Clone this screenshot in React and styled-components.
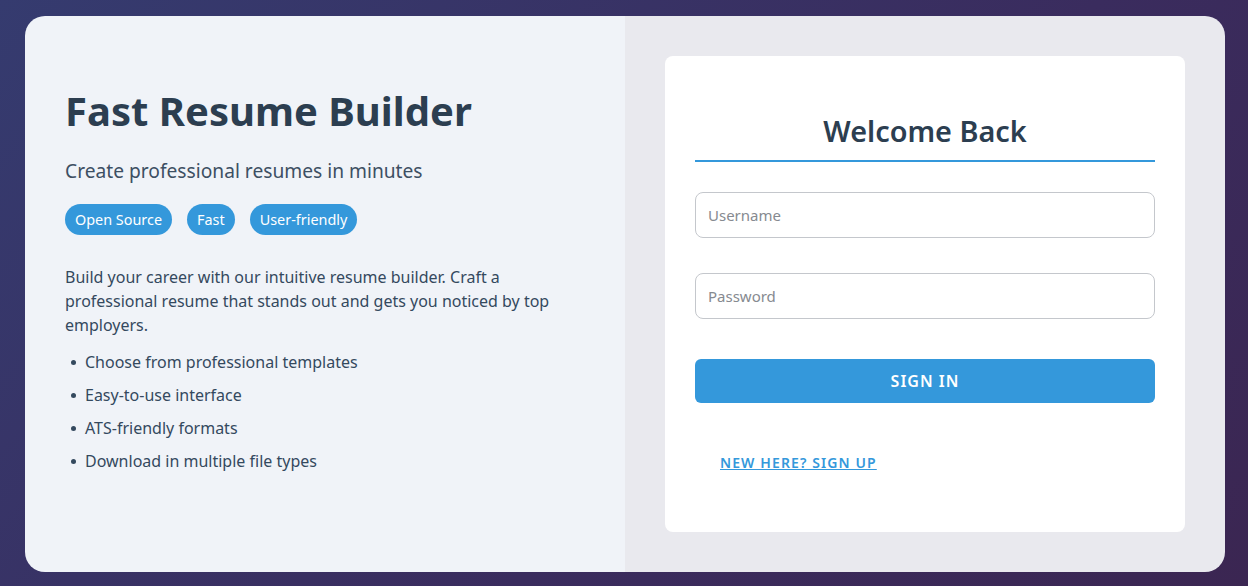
import React from 'react'
import styled, { createGlobalStyle } from 'styled-components'

const GlobalStyle = createGlobalStyle`
    * { box-sizing: border-box; }
    body {
        margin: 0;
        font-family: "Noto Sans", "Open Sans", sans-serif;
        background: linear-gradient(135deg, #353b6f 0%, #3a2c5e 60%, #3b2652 100%);
        min-height: 586px;
    }
`

const Page = styled.div`
    height: 586px;
    display: flex;
    align-items: center;
    justify-content: center;
    padding-top: 2px;
`

const Shell = styled.div`
    width: 1200px;
    height: 556px;
    display: flex;
    border-radius: 20px;
    overflow: hidden;
    margin-left: 2px;
`

const Intro = styled.section`
    flex: 1;
    background: #f0f3f8;
    padding: 71px 40px 0;
    color: #34495e;
`

const Title = styled.h1`
    margin: 0;
    font-size: 40px;
    line-height: 48px;
    font-weight: 700;
    color: #2c3e50;
`

const Subtitle = styled.p`
    margin: 21px 0 0;
    font-size: 19.2px;
    line-height: 30px;
    color: #3d4f63;
`

const Tags = styled.div`
    display: flex;
    gap: 15px;
    margin-top: 18px;
`

const Tag = styled.span`
    background: #3498db;
    color: #fff;
    font-size: 14.4px;
    line-height: 21px;
    padding: 5px 10px;
    border-radius: 16px;
`

const Text = styled.p`
    margin: 30px 0 0;
    font-size: 16px;
    line-height: 24px;
    width: 500px;
`

const List = styled.ul`
    margin: 13px 0 0;
    padding: 0;
    list-style: none;
`

const Item = styled.li`
    display: flex;
    font-size: 16px;
    line-height: 24px;
    margin-bottom: 9px;
    &::before {
        content: '';
        width: 5px;
        height: 5px;
        border-radius: 50%;
        background: #34495e;
        margin: 10px 9px 0 6px;
        flex-shrink: 0;
    }
`

const Aside = styled.section`
    flex: 1;
    background: #e9e9ee;
    padding: 40px;
    display: flex;
`

const Card = styled.div`
    flex: 1;
    background: #fff;
    border-radius: 8px;
    padding: 57px 30px 0;
`

const CardTitle = styled.h2`
    margin: 0;
    text-align: center;
    font-size: 28.8px;
    line-height: 36px;
    font-weight: 600;
    color: #2c3e50;
    padding-bottom: 11px;
    border-bottom: 2px solid #3498db;
`

const Field = styled.input`
    display: block;
    width: 100%;
    height: 46px;
    margin-top: ${p => p.$gap}px;
    padding: 0 12px;
    font-family: inherit;
    font-size: 15px;
    border: 1px solid #c4c7cc;
    border-radius: 8px;
    outline: none;
    &::placeholder { color: #868a90; }
`

const Button = styled.button`
    display: block;
    width: 100%;
    height: 44px;
    margin-top: 40px;
    border: none;
    border-radius: 6px;
    background: #3498db;
    color: #fff;
    font-family: inherit;
    font-size: 16px;
    font-weight: 600;
    letter-spacing: 1px;
`

const Footer = styled.div`
    margin-top: 48px;
    padding-left: 25px;
`

const SignUp = styled.a`
    font-size: 14px;
    line-height: 20px;
    font-weight: 600;
    letter-spacing: 1.1px;
    color: #3498db;
    text-decoration: underline;
`

const features = [
    'Choose from professional templates',
    'Easy-to-use interface',
    'ATS-friendly formats',
    'Download in multiple file types',
]

const App = () => {
  return (
    <Page>
        <GlobalStyle />
        <Shell>
            <Intro>
                <Title>Fast Resume Builder</Title>
                <Subtitle>Create professional resumes in minutes</Subtitle>
                <Tags>
                    <Tag>Open Source</Tag>
                    <Tag>Fast</Tag>
                    <Tag>User-friendly</Tag>
                </Tags>
                <Text>Build your career with our intuitive resume builder. Craft a professional resume that stands out and gets you noticed by top employers.</Text>
                <List>
                    {features.map(f => <Item key={f}>{f}</Item>)}
                </List>
            </Intro>
            <Aside>
                <Card>
                    <CardTitle>Welcome Back</CardTitle>
                    <Field $gap={30} placeholder="Username" />
                    <Field $gap={35} type="password" placeholder="Password" />
                    <Button>SIGN IN</Button>
                    <Footer>
                        <SignUp href="#">NEW HERE? SIGN UP</SignUp>
                    </Footer>
                </Card>
            </Aside>
        </Shell>
    </Page>
  )
}

export default App
